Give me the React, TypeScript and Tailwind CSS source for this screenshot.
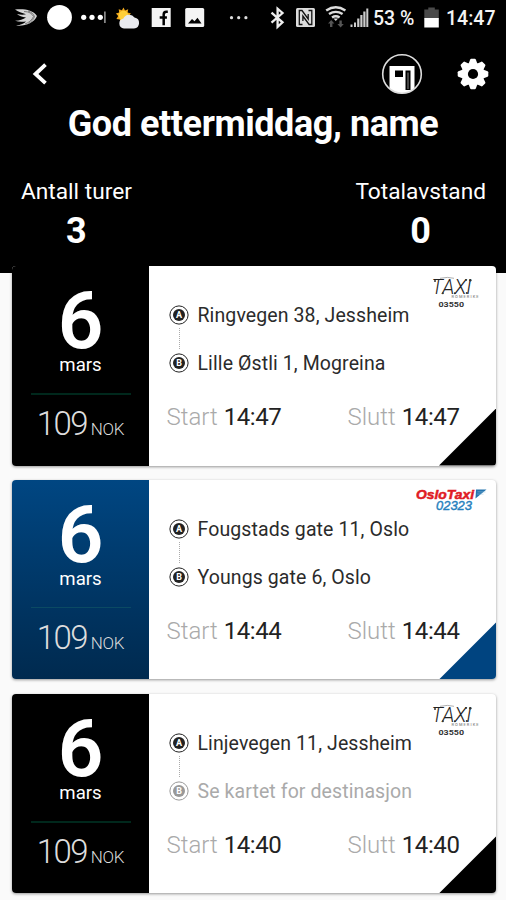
import React from "react";

type Brand = "taxi" | "oslo";

interface Trip {
  from: string;
  to: string;
  start: string;
  end: string;
  brand: Brand;
  unknownDestination?: boolean;
}

const trips: Trip[] = [
  { from: "Ringvegen 38, Jessheim", to: "Lille Østli 1, Mogreina", start: "14:47", end: "14:47", brand: "taxi" },
  { from: "Fougstads gate 11, Oslo", to: "Youngs gate 6, Oslo", start: "14:44", end: "14:44", brand: "oslo" },
  { from: "Linjevegen 11, Jessheim", to: "Se kartet for destinasjon", start: "14:40", end: "14:40", brand: "taxi", unknownDestination: true },
];

function StatusBar() {
  return (
    <div className="flex h-9 shrink-0 items-center pl-[14px] text-[#f4f4f4]">
      <svg className="h-9 w-6 shrink-0" viewBox="14 0 24 36" fill="none">
        <path d="M15 9.500C23 8.500 33 9.500 37 16c-3 7-12 10.500-21 9.500 5-.5 8-2 10-4-4 .6-8 .4-11-.7 5-.2 8-1.300 11-3.300-4-.5-7-1.500-9-3.500 4 1 7 .8 9 .2-4-1.200-8-2.700-11-4.700z" fill="#d5d5d5" />
        <path d="M24 11.500c5 0 8 2 9.500 5C32 20 29 22.500 25 24M28 11c3.500 1 5.500 3 6.500 5.500-1 3-3 5-6 7" stroke="#555" strokeWidth=".7" />
      </svg>
      <svg className="ml-2 h-9 w-[27px] shrink-0" viewBox="46 0 27 36"><circle cx="59.500" cy="17.300" r="12.400" fill="#fff" /></svg>
      <svg className="ml-[7px] h-9 w-[27px] shrink-0" viewBox="80 0 27 36" fill="#fff">
        <circle cx="83.700" cy="17.300" r="2.600" /><circle cx="92" cy="17.300" r="2.600" /><circle cx="100.300" cy="17.300" r="2.600" />
        <path d="M104.200 11.500h1.400v11.500h-1.400z" fill="#aaa" />
      </svg>
      <svg className="ml-2 h-9 w-[25px] shrink-0" viewBox="115 0 25 36">
        <path d="M123.500 7.500l1.500 3 3.200-1.200-.6 3.300 3.400.9-2.500 2.400 1.700 3-3.500.3-.4 3.500-3-1.800-2.800 2-.7-3.400-3.400-.4 1.800-3-2.300-2.500 3.300-1-.5-3.400 3.200 1.100z" fill="#f0a81c" />
        <circle cx="123.500" cy="15.500" r="4.800" fill="#ffcf3a" />
        <path d="M124 28.500a5 5 0 0 1-.6-9.900 6.300 6.300 0 0 1 11.100-1 5.500 5.500 0 0 1-.5 10.900z" fill="#e9eaee" />
      </svg>
      <svg className="ml-[11px] h-9 w-5 shrink-0" viewBox="151 0 20 36">
        <path d="M151.700 8h19v19h-19z" fill="#f4f4f4" />
        <path d="M167.800 11.700h-1.500q-2.600 0-2.600 2.800V25.200M159.700 17.500h7.200" stroke="#000" strokeWidth="2.500" fill="none" />
      </svg>
      <svg className="ml-[14px] h-9 w-5 shrink-0" viewBox="185 0 20 36">
        <rect x="185.200" y="8" width="19" height="19" rx="1.500" fill="#f4f4f4" />
        <path d="M188 23.500l4-4.500 2.500 2.300 3-3.600 4 5.800z" fill="#000" />
      </svg>
      <svg className="ml-6 h-9 w-5 shrink-0" viewBox="229 0 20 36" fill="#ddd">
        <circle cx="231.500" cy="17.700" r="1.600" /><circle cx="238.700" cy="17.700" r="1.600" /><circle cx="245.900" cy="17.700" r="1.600" />
      </svg>
      <svg className="ml-5 h-9 w-[17px] shrink-0" viewBox="269 0 17 36" fill="none" stroke="#eee" strokeWidth="2.300">
        <path d="M271.500 12.700l11 9.600-4.900 4.500V8.700l4.900 4.300-11 9.600" />
      </svg>
      <svg className="ml-[10px] h-9 w-5 shrink-0" viewBox="296 0 20 36">
        <rect x="296" y="8" width="19" height="19" rx="1.500" fill="#ddd" />
        <path d="M302.500 24.500h-3.200V10.500h2.700l6.200 8.500V14M308.500 10.500h3.300v14h-2.700l-6.200-8.500V21" fill="none" stroke="#111" strokeWidth="1.300" />
      </svg>
      <svg className="ml-2 h-9 w-[23px] shrink-0" viewBox="324 0 23 36" fill="none" stroke="#ddd" strokeWidth="2.400">
        <path d="M326.200 10.500q9.600-6.500 19.200 0M329 14.100q6.800-4.500 13.600 0M332 17.500q3.800-2.500 7.600 0" />
        <path d="M335.800 21l-2.300-2.500h4.600z" fill="#ddd" stroke="none" />
        <path d="M331.200 27v-5M340.600 20.500v5" stroke="#555" />
        <path d="M328 23.500l3.200-3.500 3.200 3.500zM337.400 24l3.200 3.500 3.200-3.500z" fill="#555" stroke="none" />
      </svg>
      <svg className="ml-[3px] h-9 w-5 shrink-0" viewBox="350 0 20 36" fill="#ccc">
        <path d="M350.500 24.500h2V27h-2zM354 22.500h2V27h-2zM357.200 18.500h2.200V27h-2.200zM360.300 15h2.200V27h-2.200zM363.300 11.500h2.200V27h-2.200zM366.300 8.500h2V27h-2z" />
      </svg>
      <span className="mt-[2px] ml-[3px] w-[51px] shrink-0 whitespace-nowrap text-[19.500px] leading-9 font-medium">53 %</span>
      <svg className="h-9 w-4 shrink-0" viewBox="424 0 16 36">
        <path d="M424.300 9.500h4V7.500h6.500v2h4v9h-14.500z" fill="#4a4a4a" /><path d="M424.300 18h14.500v9.500h-14.500z" fill="#fff" />
      </svg>
      <span className="mt-[2px] ml-[6px] whitespace-nowrap text-[19.500px] leading-9 font-medium">14:47</span>
    </div>
  );
}

function GearIcon() {
  return (
    <svg className="size-8" viewBox="-16 -16 32 32" fill="#fff">
      {[0, 45, 90, 135].map((a) => (
        <path key={a} transform={`rotate(${a})`} d="M-4.500-10l1.700-4.600q.3-.7 1-.7h3.600q.7 0 1 .7L4.500-10v20l-1.700 4.600q-.3.700-1 .7h-3.600q-.7 0-1-.7L-4.500 10z" />
      ))}
      <circle r="11.300" />
      <circle r="5.100" fill="#000" />
    </svg>
  );
}

function TaxiLogo() {
  return (
    <svg className="h-[34px] w-[52px] overflow-visible" viewBox="0 0 52 34" fontFamily="Roboto, sans-serif">
      <text x="1.500" y="18" fontSize="20" fontWeight="300" fontStyle="italic" textLength="40" lengthAdjust="spacingAndGlyphs" fill="#222">TAXI</text>
      <path d="M10 2.300q8-1.800 14 0" stroke="#999" strokeWidth=".8" fill="none" />
      <g fill="#333">
        <circle cx="5" cy="5" r="1" /><circle cx="12.800" cy="17.300" r="1" /><circle cx="24.800" cy="17.300" r="1" /><circle cx="36" cy="4" r="1" /><circle cx="40.300" cy="4.300" r="1.200" /><circle cx="36.800" cy="17" r="1.100" />
      </g>
      <text x="21.500" y="21.500" fontSize="4" fontWeight="500" textLength="27" fill="#888">ROMERIKE</text>
      <text x="8.500" y="30.700" fontSize="7.800" fontWeight="700" textLength="25.500" lengthAdjust="spacingAndGlyphs" fill="#333">03550</text>
    </svg>
  );
}

function OsloLogo() {
  return (
    <svg className="h-[26px] w-[72px]" viewBox="0 0 72 26" fontFamily="Liberation Sans, sans-serif">
      <text x="0" y="11.500" fontSize="12.500" fontWeight="700" fontStyle="italic" textLength="58" lengthAdjust="spacingAndGlyphs" fill="#e01b24" stroke="#e01b24" strokeWidth=".5">OsloTaxi</text>
      <path d="M60 2.500h10.500L59.500 11.500z" fill="#2474ae" />
      <path d="M61.500 4.800l8 .2M61 7l6.500.2" stroke="#9cc5df" strokeWidth=".5" />
      <text x="20" y="23" fontSize="12.500" fontStyle="italic" textLength="36" lengthAdjust="spacingAndGlyphs" fill="#2580bd" stroke="#2580bd" strokeWidth=".4">02323</text>
    </svg>
  );
}

function Stop({ letter, children, muted }: { letter: string; children: React.ReactNode; muted?: boolean }) {
  const ink = muted ? "#999" : "#222";
  return (
    <div className={`flex h-6 items-center gap-[9px] ${muted ? "text-[#aaa]" : "text-[#2b2b2b]"}`}>
      <svg className="size-5 shrink-0" viewBox="0 0 20 20">
        <circle cx="10" cy="10" r="9.100" fill="none" stroke={ink} strokeWidth="1" />
        <circle cx="10" cy="10" r="6" fill={ink} />
        <text x="10" y="13.200" textAnchor="middle" fontFamily="Roboto, sans-serif" fontWeight="700" fontSize="9" fill="#fff">{letter}</text>
      </svg>
      <span className="mt-[2px] text-[19.500px] leading-6 tracking-[0.100px] whitespace-nowrap">{children}</span>
    </div>
  );
}

function TripCard({ trip }: { trip: Trip }) {
  const oslo = trip.brand === "oslo";
  return (
    <article className="relative flex h-[199.600px] w-[484px] shrink-0 overflow-hidden rounded-[4px] bg-white shadow-[0_1px_3px_rgba(0,0,0,0.4)]">
      <div className={`flex w-[137px] shrink-0 flex-col items-center text-white ${oslo ? "bg-linear-to-b from-[#004682] to-[#002a4f]" : "bg-black"}`}>
        <div className="mt-[15px] h-20 text-[80px] leading-[80px] font-semibold">6</div>
        <div className="-mt-[8px] h-6 text-[18.600px] leading-6">mars</div>
        <div className={`mt-[16px] w-[100px] ${oslo ? "mb-[1px] h-px bg-[#0b4a63]" : "h-[2px] bg-[#00281c]"}`} />
        <div className="mt-[9px] flex h-10 items-baseline leading-10 font-light text-[#ddd]">
          <span className="text-[33px] tracking-[-1.600px]">109</span>
          <span className="ml-[4px] text-[17px] tracking-[-0.300px]">NOK</span>
        </div>
      </div>
      <div className="flex flex-1 flex-col pt-[37px] pl-[19.500px]">
        <Stop letter="A">{trip.from}</Stop>
        <div className="mt-[1px] mb-[2px] ml-[10px] h-[21px] w-0 border-l border-dotted border-[#aaa]" />
        <Stop letter="B" muted={trip.unknownDestination}>{trip.to}</Stop>
        <div className="mt-[27px] flex h-[30px] text-[24px] leading-[30px] whitespace-nowrap text-[#222]">
          <span className="-ml-[2px] w-[181px]"><span className="font-light text-[#aaa]">Start</span> <span className="tracking-[-0.400px]">{trip.start}</span></span>
          <span><span className="font-light text-[#aaa]">Slutt</span> <span className="tracking-[-0.400px]">{trip.end}</span></span>
        </div>
      </div>
      <div className={`absolute ${oslo ? "top-[7px] right-[8px]" : "top-[10px] right-[14px]"}`}>{oslo ? <OsloLogo /> : <TaxiLogo />}</div>
      <div className={`absolute right-0 bottom-0 size-[57px] [clip-path:polygon(100%_0,100%_100%,0_100%)] ${oslo ? "bg-[#004480]" : "bg-black"}`} />
    </article>
  );
}

export default function App() {
  return (
    <main className="flex h-[900px] w-[506px] flex-col overflow-hidden bg-[#fafafa] font-[Roboto,sans-serif]">
      <header className="flex h-[273px] shrink-0 flex-col bg-black text-white">
        <StatusBar />
        <div className="flex h-[75px] shrink-0 items-center pr-[17px] pl-[31px]">
          <svg className="h-6 w-4" viewBox="0 0 16 24" fill="none" stroke="#fff" strokeWidth="3.800"><path d="M14.500 2.700L4.500 12l10 9.200" /></svg>
          <svg className="ml-auto size-[42px]" viewBox="0 0 42 42">
            <defs><clipPath id="badge"><circle cx="21" cy="21" r="19.500" /></clipPath></defs>
            <path clipPath="url(#badge)" d="M8.500 13h25v28h-25z" fill="#fff" />
            <path d="M14 17.500h8V24h-8zM24.500 17.500h5V37h-5z" fill="#000" />
            <path d="M26.500 19.500h1V36h-1z" fill="#888" />
            <circle cx="21" cy="21" r="19.300" fill="none" stroke="#ddd" strokeWidth="1.600" />
          </svg>
          <div className="ml-[34px]"><GearIcon /></div>
        </div>
        <h1 className="-mt-[9px] h-11 text-center text-[36px] leading-11 font-bold tracking-[-0.420px] whitespace-nowrap">God ettermiddag, name</h1>
        <div className="mt-[32px] flex justify-between pr-[20px] pl-[21px] text-center">
          <div><div className="h-7 text-[22.700px] leading-7">Antall turer</div><div className="mt-[5px] h-10 text-[36px] leading-10 font-bold">3</div></div>
          <div><div className="h-7 text-[22.700px] leading-7">Totalavstand</div><div className="mt-[5px] h-10 text-[36px] leading-10 font-bold">0</div></div>
        </div>
      </header>
      <section className="-mt-[7px] flex flex-col gap-[14.300px] pl-3">
        {trips.map((trip) => <TripCard key={trip.start} trip={trip} />)}
      </section>
    </main>
  );
}
